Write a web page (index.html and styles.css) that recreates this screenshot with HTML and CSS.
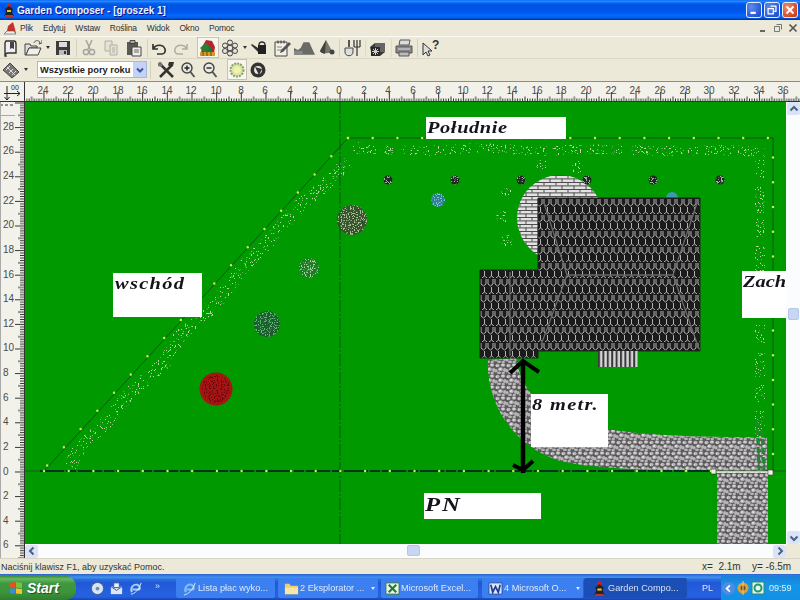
FILE: index.html
```html
<!DOCTYPE html>
<html lang="pl">
<head>
<meta charset="utf-8">
<title>Garden Composer</title>
<link rel="stylesheet" href="styles.css">
</head>
<body>
<div class="window">
  <header class="titlebar">
    <svg class="i14" viewBox="0 0 14 14"><circle cx="7" cy="2.500" r="2" fill="#c22"/><path d="M3 6l4-3 4 3-1 3 2 4H2l2-4z" fill="#222"/><path d="M5 7h4v2H5z" fill="#e8c030"/><path d="M3 12h8v2H3z" fill="#b33"/></svg>
    <span class="title-text">Garden Composer - [groszek 1]</span>
    <div class="winbtns">
      <span class="winbtn"><svg viewBox="0 0 16 16"><rect x="4" y="10" width="6" height="2.500" fill="#fff"/></svg></span>
      <span class="winbtn"><svg viewBox="0 0 16 16"><path d="M6.500 3.500h6v6h-2M3.500 6.500h6v6h-6z" fill="none" stroke="#fff" stroke-width="1.400"/></svg></span>
      <span class="winbtn close"><svg viewBox="0 0 16 16"><path d="M4 4l8 8M12 4l-8 8" stroke="#fff" stroke-width="2.200"/></svg></span>
    </div>
  </header>

  <nav class="menubar">
    <svg class="i14 menu-icon" viewBox="0 0 14 14"><path d="M1 13l3-3 1-5 5-4 2 7 1 5z" fill="#c9302c"/><path d="M1 13h12l-2-3H4z" fill="#eee" stroke="#555" stroke-width=".6"/></svg>
    <span>Plik</span><span>Edytuj</span><span>Wstaw</span><span>Roślina</span><span>Widok</span><span>Okno</span><span>Pomoc</span>
    <div class="mdibtns">
      <svg viewBox="0 0 10 10"><rect x="2" y="7" width="5" height="2" fill="#666"/></svg>
      <svg viewBox="0 0 10 10"><path d="M3.500 1.500h5v5M1.500 3.500h5v5h-5z" fill="none" stroke="#777"/></svg>
      <svg viewBox="0 0 10 10"><path d="M1.500 1.500l7 7M8.500 1.500l-7 7" stroke="#555" stroke-width="1.700"/></svg>
    </div>
  </nav>

  <div class="toolbar tb1">
    <span class="tb"><svg viewBox="0 0 18 18"><path d="M4 2h8c2 0 2 2 2 3v9H6c-2 0-3 1-2 3H3V4z" fill="#eee" stroke="#333" stroke-width="1.400"/><path d="M8 3v7l2-1 2 1V3z" fill="#444"/></svg></span>
    <span class="tb"><svg viewBox="0 0 18 18"><path d="M1 5h5l1 2h6v2H5l-3 7H1z" fill="#ddd" stroke="#444"/><path d="M5 9h12l-3 7H2z" fill="#f0f0e8" stroke="#444"/><path d="M10 4c1-3 4-3 6-1l-1 2 3-1 0-3" fill="none" stroke="#555"/></svg></span>
    <span class="tb-arrow"><i class="caret"></i></span>
    <span class="tb"><svg viewBox="0 0 18 18"><path d="M2 2h14v14H2z" fill="#3c3c3c"/><path d="M5 3h8v5H5z" fill="#ddd"/><path d="M5 11h8v5H5z" fill="#bbb"/><path d="M10 12h2v3h-2z" fill="#333"/></svg></span>
    <i class="sep"></i>
    <span class="tb"><svg viewBox="0 0 18 18"><path d="M6 1l4 9M12 1L8 10" stroke="#a5a5a0" stroke-width="1.500" fill="none"/><circle cx="6" cy="13" r="2.600" fill="none" stroke="#a5a5a0" stroke-width="1.500"/><circle cx="12" cy="13" r="2.600" fill="none" stroke="#a5a5a0" stroke-width="1.500"/></svg></span>
    <span class="tb"><svg viewBox="0 0 18 18"><path d="M3 2h7v10H3z" fill="#e4e2d6" stroke="#b2b0a6"/><path d="M8 6h7v10H8z" fill="#e4e2d6" stroke="#b2b0a6"/><path d="M10 9h3M10 11h3M10 13h3" stroke="#b2b0a6"/></svg></span>
    <span class="tb"><svg viewBox="0 0 18 18"><path d="M3 3h11v13H3z" fill="#5a5a50"/><path d="M6 1.500h5v3H6z" fill="#aaa" stroke="#333" stroke-width=".8"/><path d="M8 8h9v9H8z" fill="#eee" stroke="#444"/><path d="M10 11h5M10 13h5" stroke="#666"/></svg></span>
    <i class="sep sep-b"></i>
    <span class="tb"><svg viewBox="0 0 18 18"><path d="M3 5v5h5M3 10c3-5 10-5 12 0 1 3-1 5-3 5H7" fill="none" stroke="#333" stroke-width="1.700"/></svg></span>
    <span class="tb"><svg viewBox="0 0 18 18"><path d="M15 5v5h-5M15 10c-3-5-10-5-12 0-1 3 1 5 3 5h5" fill="none" stroke="#aeaca2" stroke-width="1.500"/></svg></span>
    <span class="tb active tb-gap"><svg viewBox="0 0 18 18"><path d="M7 1l6 1 3 6-1 6H2l1-6z" fill="#b3262a"/><path d="M1 9l6-5 4 4-5 6z" fill="#2e7c37"/><path d="M7 13l3-6 3 2-1 5z" fill="#197a3d"/><path d="M1 13h15v4H1z" fill="#d99a28"/><path d="M4 13v4M8 13v4M12 13v4" stroke="#6d4a12"/></svg></span>
    <span class="tb"><svg viewBox="0 0 18 18"><g fill="#e8e6da" stroke="#444"><circle cx="9" cy="3.500" r="2.500"/><circle cx="14" cy="6.500" r="2.500"/><circle cx="14" cy="12" r="2.500"/><circle cx="9" cy="14.500" r="2.500"/><circle cx="4" cy="12" r="2.500"/><circle cx="4" cy="6.500" r="2.500"/><circle cx="9" cy="9" r="2.800"/></g></svg></span>
    <span class="tb-arrow"><i class="caret"></i></span>
    <span class="tb"><svg viewBox="0 0 18 18"><path d="M7 6h8v9H7z" fill="#222"/><path d="M7 9L1 5l-1 1 7 7z" fill="#333"/><path d="M8 6c0-4 6-4 6 0" fill="none" stroke="#333" stroke-width="1.300"/></svg></span>
    <span class="tb"><svg viewBox="0 0 18 18"><path d="M2 3h12v14H2z" fill="#f2f0e4" stroke="#444"/><path d="M5 1.500v3M8 1.500v3M11 1.500v3" stroke="#333"/><path d="M4 8h5M4 11h5" stroke="#888"/><path d="M16 3l2 2-8 8-3 1 1-3z" fill="#555"/></svg></span>
    <span class="tb"><svg class="wide" viewBox="0 0 22 18"><path d="M0 16V9l4 2 3-2 3-6h6l4 9 2 4z" fill="#6a6a66"/><path d="M0 12h9v4H0z" fill="#888"/></svg></span>
    <span class="tb"><svg viewBox="0 0 18 18"><path d="M9 1l6 11c-1 3-11 3-12 0z" fill="#77776f"/><path d="M9 1l-6 11c1 2 3 2 5 3z" fill="#44443f"/><circle cx="15" cy="13" r="2.500" fill="#444"/></svg></span>
    <i class="sep"></i>
    <span class="tb"><svg viewBox="0 0 18 18"><path d="M11 1v7M14 1v7M17 1v7M11 8h6M14 8v9" stroke="#333" stroke-width="1.200" fill="none"/><path d="M6 1v7" stroke="#333" stroke-width="1.600"/><path d="M2 9h8v4c0 5-8 5-8 0z" fill="#ddd" stroke="#444"/></svg></span>
    <i class="sep sep-f"></i>
    <span class="tb"><svg viewBox="0 0 18 18"><path d="M1 8l5-4h10v9l-5 4H3z" fill="#3a3a3a"/><path d="M6 4h10v9H6z" fill="#666"/><path d="M2 8h9v9H2z" fill="#2a2a2a"/><path d="M4 10l5 5M9 10l-5 5M6.500 9v7M3 12.500h7" stroke="#ccc"/></svg></span>
    <i class="sep sep-f"></i>
    <span class="tb"><svg viewBox="0 0 18 18"><path d="M5 1h10l-1 5H4z" fill="#ddd" stroke="#555"/><path d="M1 7h16v7H1z" fill="#888" stroke="#555"/><path d="M3 10h12" stroke="#ddd"/><path d="M4 13h10v4H4z" fill="#bbb" stroke="#555"/></svg></span>
    <i class="sep"></i>
    <span class="tb help"><svg viewBox="0 0 18 18"><path d="M1 4v12l3-3 2 4 2-1-2-4h4z" fill="#ddd" stroke="#333"/><text x="10" y="10" class="help-q">?</text></svg></span>
  </div>

  <div class="toolbar tb2">
    <span class="tb"><svg viewBox="0 0 18 18"><path d="M1 9l7-7 9 9-7 6z" fill="#777" stroke="#444"/><path d="M4 9l4-4M7 12l4-4M10 14l4-4M5 6l8 8" stroke="#ddd"/></svg></span>
    <span class="tb-arrow tb-arrow2"><i class="caret"></i></span>
    <div class="combo">
      <span class="combo-text">Wszystkie pory roku</span>
      <span class="combo-btn"><svg viewBox="0 0 10 10"><path d="M2 3.500l3 3 3-3" fill="none" stroke="#3b56a6" stroke-width="2"/></svg></span>
    </div>
    <i class="sep sep-h"></i>
    <span class="tb"><svg viewBox="0 0 18 18"><path d="M2 2l14 14M3 16L15 4" stroke="#333" stroke-width="2.500"/><path d="M12 1l5 0-1 4-3 1-2-2z" fill="#333"/><path d="M1 2l3-1 2 3-2 2-3-1z" fill="#777"/></svg></span>
    <span class="tb"><svg viewBox="0 0 18 18"><circle cx="8" cy="7" r="5" fill="#e9e9e0" stroke="#444" stroke-width="1.400"/><path d="M5.500 7h5M8 4.500v5" stroke="#222" stroke-width="1.400"/><path d="M11.500 11l4 5" stroke="#555" stroke-width="2"/></svg></span>
    <span class="tb"><svg viewBox="0 0 18 18"><circle cx="8" cy="7" r="5" fill="#e9e9e0" stroke="#444" stroke-width="1.400"/><path d="M5.500 7h5" stroke="#222" stroke-width="1.400"/><path d="M11.500 11l4 5" stroke="#555" stroke-width="2"/></svg></span>
    <span class="tb active tb-gap2"><svg viewBox="0 0 18 18"><circle cx="9" cy="9" r="6.500" fill="#d8e8a0" stroke="#8aa070" stroke-width="2" stroke-dasharray="2 1"/><circle cx="9" cy="9" r="3.500" fill="#f4f0b0"/></svg></span>
    <span class="tb"><svg viewBox="0 0 18 18"><circle cx="9" cy="9" r="7.500" fill="#333"/><circle cx="9" cy="9" r="4" fill="#e8e8e0"/><path d="M6 6l7 2-3 6z" fill="#333"/></svg></span>
  </div>

  <svg class="top-ruler" viewBox="0 0 800 20" aria-label="linijka">
    <defs>
      <pattern id="tick-h" width="24.67" height="20" patternUnits="userSpaceOnUse" patternTransform="translate(339.5 0)">
        <path d="M.5 10v10M2.970 16.500v4M5.430 16.500v4M7.900 16.500v4M10.370 16.500v4M12.830 14.500v6M15.300 16.500v4M17.770 16.500v4M20.230 16.500v4M22.700 16.500v4" stroke="#333" fill="none"/>
      </pattern>
    </defs>
    <rect x="26" y="0" width="774" height="20" fill="url(#tick-h)"/>
    <path d="M0 19.500h800" stroke="#333"/>
    <path d="M24.500 0v20" stroke="#333"/>
    <g class="ruler-num" text-anchor="middle">
      <text x="43" y="12">24</text><text x="68" y="12">22</text><text x="93" y="12">20</text><text x="118" y="12">18</text><text x="142" y="12">16</text><text x="167" y="12">14</text><text x="191" y="12">12</text><text x="216" y="12">10</text><text x="241" y="12">8</text><text x="265" y="12">6</text><text x="290" y="12">4</text><text x="315" y="12">2</text><text x="339" y="12">0</text><text x="364" y="12">2</text><text x="388" y="12">4</text><text x="413" y="12">6</text><text x="438" y="12">8</text><text x="463" y="12">10</text><text x="487" y="12">12</text><text x="512" y="12">14</text><text x="537" y="12">16</text><text x="561" y="12">18</text><text x="586" y="12">20</text><text x="611" y="12">22</text><text x="635" y="12">24</text><text x="660" y="12">26</text><text x="685" y="12">28</text><text x="709" y="12">30</text><text x="734" y="12">32</text><text x="759" y="12">34</text><text x="783" y="12">36</text>
    </g>
    <text x="11" y="8" class="ruler-small">00</text>
    <path d="M4 11.500h16M17 9l3 2.500-3 2.500M7 4v14M4.500 15l2.500 3 2.500-3" fill="none" stroke="#222"/>
  </svg>

  <main class="workspace">
    <svg class="left-ruler" viewBox="0 102 25 456" aria-label="linijka">
      <defs>
        <pattern id="tick-v" width="25" height="24.6" patternUnits="userSpaceOnUse" patternTransform="translate(0 471.5)">
          <path d="M15 .5h10M20 2.960h5M20 5.420h5M20 7.880h5M20 10.340h5M18 12.800h7M20 15.260h5M20 17.720h5M20 20.180h5M20 22.640h5" stroke="#333" fill="none"/>
        </pattern>
      </defs>
      <rect x="0" y="102" width="25" height="456" fill="url(#tick-v)"/>
      <path d="M24.500 102v456" stroke="#333"/>
      <path d="M0 105h14" stroke="#333" stroke-dasharray="3 2"/>
      <path d="M0 115.500h15" stroke="#aaa"/>
      <path d="M.5 102v456" stroke="#aaa"/>
      <g class="ruler-num">
        <text x="3" y="130">28</text><text x="3" y="154">26</text><text x="3" y="179">24</text><text x="3" y="204">22</text><text x="3" y="228">20</text><text x="3" y="253">18</text><text x="3" y="278">16</text><text x="3" y="302">14</text><text x="3" y="327">12</text><text x="3" y="351">10</text><text x="3" y="376">8</text><text x="3" y="401">6</text><text x="3" y="425">4</text><text x="3" y="450">2</text><text x="3" y="475">0</text><text x="3" y="499">2</text><text x="3" y="524">4</text><text x="3" y="548">6</text>
      </g>
    </svg>

    <div class="canvas">
      <svg class="plan" viewBox="25 102 761 442" role="img" aria-label="plan ogrodu">
        <defs>
          <filter id="speck" x="-10%" y="-10%" width="120%" height="120%" color-interpolation-filters="sRGB">
            <feTurbulence type="fractalNoise" baseFrequency="0.75" numOctaves="2" seed="4" result="n"/>
            <feColorMatrix in="n" type="matrix" values="0 0 0 0 0  0 0 0 0 0  0 0 0 0 0  14 0 0 0 -7.700" result="m"/>
            <feComposite in="SourceGraphic" in2="m" operator="in"/>
          </filter>
          <filter id="speck-hedge" x="-10%" y="-10%" width="120%" height="120%" color-interpolation-filters="sRGB">
            <feTurbulence type="fractalNoise" baseFrequency="0.6" numOctaves="2" seed="9" result="n"/>
            <feColorMatrix in="n" type="matrix" values="0 0 0 0 0  0 0 0 0 0  0 0 0 0 0  14 0 0 0 -8.700" result="m"/>
            <feComposite in="SourceGraphic" in2="m" operator="in"/>
          </filter>
          <pattern id="roof" width="7" height="16" patternUnits="userSpaceOnUse" patternTransform="translate(480 198)">
            <rect width="7" height="16" fill="#1b1b1b"/>
            <path d="M1 1v5l2.500 2L6 6V1M4.500 9v5l2.500 2M4.500 14L2 16" fill="none" stroke="#c4c4c4" stroke-width=".9"/>
          </pattern>
          <pattern id="brick" width="12" height="7" patternUnits="userSpaceOnUse" patternTransform="translate(517 175)">
            <rect width="12" height="7" fill="#e2e2e2"/>
            <path d="M0 .5h12M0 3.900h12M3 0v3.500M9 3.500v3.500" stroke="#4c4c4c" fill="none"/>
          </pattern>
          <pattern id="gravel" width="11" height="11" patternUnits="userSpaceOnUse">
            <rect width="11" height="11" fill="#5b5b5b"/>
            <g fill="#b7b4b7"><ellipse cx="2.500" cy="2.500" rx="2.100" ry="1.800"/><ellipse cx="8" cy="2" rx="2.300" ry="1.700"/><ellipse cx="5.500" cy="6.200" rx="2.400" ry="1.900"/><ellipse cx="1" cy="7.800" rx="1.700" ry="1.700"/><ellipse cx="9.800" cy="7" rx="1.800" ry="1.900"/><ellipse cx="4" cy="9.800" rx="2" ry="1.300"/><ellipse cx="8.200" cy="10" rx="1.700" ry="1.200"/></g>
            <g fill="#e4e2e4"><circle cx="8" cy="1.800" r=".9"/><circle cx="5" cy="6" r="1"/><circle cx="1.500" cy="3" r=".7"/></g>
          </pattern>
          <pattern id="stairs" width="4.400" height="16" patternUnits="userSpaceOnUse" patternTransform="translate(598 351)">
            <rect width="4.400" height="16" fill="#d6d6d6"/>
            <rect width="2" height="16" fill="#3a3a3a"/>
          </pattern>
        </defs>
        <rect x="25" y="102" width="761" height="442" class="lawn"/>

        <g filter="url(#speck-hedge)" fill="none" stroke="#bcd4a8" stroke-width="10">
          <path d="M358 148L420 151 480 148 540 151 600 149 660 151 720 150 765 152" stroke-dasharray="22 4 11 6 30 3"/>
          <path d="M70 466L80 447 100 430 130 393 165 362 180 335 215 305 245 265 270 240 300 205 320 190 348 162" stroke-width="13" stroke-dasharray="18 3 24 4"/>
          <path d="M760 160V300M760 325V470" stroke-dasharray="18 9 26 6"/>
        </g>

        <circle cx="560" cy="218" r="43" fill="url(#brick)"/>
        <circle cx="672" cy="198" r="6" fill="#3a9ab0"/>
        <path class="drive" d="M488 360C486 400 510 445 560 461 600 470 660 470 710 471L767 471 767 437C700 437 640 437 580 424 540 415 520 385 516 358Z"/>
        <rect class="drive" x="717" y="472" width="51" height="72"/>
        <path d="M757 420L759 470M762 430L764 470" stroke="#1f8a2c" stroke-width="3" stroke-dasharray="6 3" fill="none"/>

        <path class="roof" d="M538 198H700V351H538V358H480V270H538Z"/>
        <path d="M567 275H673M673 275L698 200M673 275L699 349M567 275L541 345M567 275L543 200M510 272V356" stroke="#6a6a6a" stroke-width="1.300" fill="none"/>
        <rect x="598" y="351" width="40" height="16" fill="url(#stairs)"/>

        <g filter="url(#speck-hedge)" fill="#cfe0bd">
          <circle cx="507" cy="194" r="6"/><circle cx="502" cy="217" r="6"/><circle cx="507" cy="241" r="6"/><circle cx="542" cy="165" r="6"/><circle cx="577" cy="167" r="6"/><circle cx="359" cy="148" r="6"/>
        </g>
        <g fill="#1c2a20">
          <circle cx="388" cy="180" r="4.500"/><circle cx="455" cy="180" r="4.500"/><circle cx="521" cy="180" r="4.500"/><circle cx="587" cy="180" r="4.500"/><circle cx="653" cy="180" r="4.500"/><circle cx="720" cy="180" r="4.500"/>
        </g>
        <g filter="url(#speck)" fill="#a8b0a8">
          <circle cx="388" cy="180" r="4.500"/><circle cx="455" cy="180" r="4.500"/><circle cx="521" cy="180" r="4.500"/><circle cx="587" cy="180" r="4.500"/><circle cx="653" cy="180" r="4.500"/><circle cx="720" cy="180" r="4.500"/>
        </g>

        <circle cx="438" cy="200" r="7" fill="#2f7f8e"/>
        <circle cx="352" cy="220" r="15" fill="#34522c"/>
        <circle cx="309" cy="268" r="10" fill="#1c7a28"/>
        <circle cx="267" cy="324" r="13" fill="#1f5a30"/>
        <circle cx="216" cy="389" r="16.500" fill="#a81414"/>
        <g filter="url(#speck)">
          <circle cx="438" cy="200" r="7" fill="#7cc8e0"/>
          <circle cx="352" cy="220" r="15" fill="#aebc98"/>
          <circle cx="309" cy="268" r="10" fill="#a8d498"/>
          <circle cx="267" cy="324" r="13" fill="#55c070"/>
        </g>
        <circle class="red-speck" cx="216" cy="389" r="14" filter="url(#speck)"/>

        <path class="dashed" d="M340 102V544"/>
        <path d="M25 471H786" stroke="#1e5a1e"/>
        <path d="M40 471H712" stroke="#032" stroke-width="2" stroke-dasharray="24 2 10 2"/>
        <path d="M713 472H770" stroke="#f2f2e8" stroke-width="1.500"/>
        <rect x="711" y="469" width="5" height="5" fill="#f2f2e0" stroke="#222" stroke-width=".6"/>
        <rect x="768" y="470" width="5" height="5" fill="#f2f2e0" stroke="#444" stroke-width=".6"/>
        <path d="M45 470L348 138H773V471" fill="none" stroke="#0a5a12"/>
        <g class="dots">
          <path d="M348 138H773V471"/>
          <path d="M348 138L43 470"/>
          <path d="M44 471H712"/>
        </g>

        <path d="M523 360V473" stroke="#000" stroke-width="4.500"/>
        <path d="M510 373L523 361 539 372M513 465L523 470 533 461" fill="none" stroke="#000" stroke-width="4"/>
      </svg>
      <div class="lbl lbl-south"><span>Południe</span></div>
      <div class="lbl lbl-east"><span>wschód</span></div>
      <div class="lbl lbl-west"><span>Zach</span></div>
      <div class="lbl lbl-dist"><span>8 metr.</span></div>
      <div class="lbl lbl-north"><span>PN</span></div>
    </div>

    <div class="vscroll">
      <span class="sbtn"><svg viewBox="0 0 12 12"><path d="M2.500 7.500L6 4l3.500 3.500" fill="none" stroke="#4d6185" stroke-width="2"/></svg></span>
      <span class="thumb thumb-v"></span>
      <span class="sbtn"><svg viewBox="0 0 12 12"><path d="M2.500 4.500L6 8l3.500-3.500" fill="none" stroke="#4d6185" stroke-width="2"/></svg></span>
    </div>
    <div class="hscroll">
      <span class="sbtn"><svg viewBox="0 0 12 12"><path d="M7.500 2.500L4 6l3.500 3.500" fill="none" stroke="#4d6185" stroke-width="2"/></svg></span>
      <span class="thumb thumb-h"></span>
      <span class="sbtn"><svg viewBox="0 0 12 12"><path d="M4.500 2.500L8 6l-3.500 3.500" fill="none" stroke="#4d6185" stroke-width="2"/></svg></span>
    </div>
    <div class="corner"></div>
  </main>

  <footer class="statusbar">
    <span class="status-msg">Naciśnij klawisz F1, aby uzyskać Pomoc.</span>
    <span class="status-x">x=&nbsp; 2.1m</span>
    <span class="status-y">y= -6.5m</span>
  </footer>
</div>

<div class="taskbar">
  <div class="start">
    <svg class="flag" viewBox="0 0 16 16"><path d="M2 3l5-1v5.500l-5 .5z" fill="#e8502a"/><path d="M8 2l6 1v5l-6-.5z" fill="#7ac143"/><path d="M2 9l5-.5V14l-5-1z" fill="#3d8ce0"/><path d="M8 8.500l6 .5v5l-6-.5z" fill="#f5c422"/></svg>
    <span>Start</span>
  </div>
  <div class="quick">
    <svg viewBox="0 0 16 16"><circle cx="8" cy="8" r="6.500" fill="#d8e4f2" stroke="#375a92"/><circle cx="8" cy="8" r="2" fill="#6d8ab8"/></svg>
    <svg viewBox="0 0 16 16"><path d="M2 6h12v8H2z" fill="#dbe7f5"/><path d="M5 2h6v5H5z" fill="#eef" stroke="#3a5a90"/><path d="M2 6l6 4 6-4" fill="none" stroke="#3a5a90"/></svg>
    <svg viewBox="0 0 16 16"><path d="M4 12c-2-5 2-9 6-8 3 1 3 5 2 5H5" fill="none" stroke="#a8d0f4" stroke-width="2"/><path d="M3 14c4 0 9-5 11-12" fill="none" stroke="#e3edf8"/></svg>
    <span class="more">»</span>
  </div>
  <div class="task t1"><svg viewBox="0 0 16 16"><path d="M4 12c-2-5 2-9 6-8 3 1 3 5 2 5H5" fill="none" stroke="#7fc0f4" stroke-width="2.200"/><path d="M2 15c5-1 10-6 12-13" fill="none" stroke="#e3edf8"/></svg><span class="task-text">Lista płac wyko...</span></div>
  <div class="task t2"><svg viewBox="0 0 16 16"><path d="M1 3h5l1 2h8v9H1z" fill="#f0cd66"/><path d="M1 7h14v7H1z" fill="#f9e6a6"/></svg><span class="task-text">2 Eksplorator ...</span><i class="down"></i></div>
  <div class="task t3"><svg viewBox="0 0 16 16"><path d="M1 2h14v12H1z" fill="#e8f2e8" stroke="#2f7a44"/><path d="M4 4l8 8M12 4l-8 8" stroke="#1f7a38" stroke-width="2.200"/></svg><span class="task-text">Microsoft Excel...</span></div>
  <div class="task t4"><svg viewBox="0 0 16 16"><path d="M1 2h14v12H1z" fill="#dfe8f7" stroke="#2b4ea0"/><path d="M3 4l2 8 3-6 3 6 2-8" fill="none" stroke="#1d3d96" stroke-width="1.800"/></svg><span class="task-text">4 Microsoft O...</span><i class="down"></i></div>
  <div class="task t5"><svg viewBox="0 0 14 14"><circle cx="7" cy="2.500" r="2" fill="#c22"/><path d="M3 6l4-3 4 3-1 3 2 4H2l2-4z" fill="#222"/><path d="M5 7h4v2H5z" fill="#e8c030"/><path d="M3 12h8v2H3z" fill="#b33"/></svg><span class="task-text">Garden Compo...</span></div>
  <span class="lang">PL</span>
  <div class="tray">
    <span class="chev"><svg viewBox="0 0 12 12"><path d="M7.500 2.500L4 6l3.500 3.500" fill="none" stroke="#fff" stroke-width="2"/></svg></span>
    <svg class="tray-ic" viewBox="0 0 14 14"><circle cx="7" cy="7" r="5.500" fill="#d9a23a"/><circle cx="7" cy="7" r="2.500" fill="#7a4a20"/><path d="M7 0v14" stroke="#f0d080"/></svg>
    <svg class="tray-ic" viewBox="0 0 14 14"><path d="M1 1h12v12H1z" fill="#e6f4ec" stroke="#2a8a68"/><circle cx="7" cy="7" r="3.500" fill="none" stroke="#1f9a70" stroke-width="2"/></svg>
    <span class="clock">09:59</span>
  </div>
</div>
</body>
</html>
```
FILE: styles.css
```css
* { box-sizing: border-box; }
html, body { margin: 0; padding: 0; }
body {
  width: 800px;
  height: 600px;
  overflow: hidden;
  display: flex;
  flex-direction: column;
  font-family: "Liberation Sans", Arial, sans-serif;
  background: #ece9d8;
  color: #222;
}
svg { display: block; }

.window { height: 574px; flex: none; display: flex; flex-direction: column; }

/* title bar */
.titlebar {
  height: 20px;
  flex: none;
  display: flex;
  align-items: center;
  padding: 0 2px;
  background: linear-gradient(#0058ee 0, #3593ff 5%, #127dff 10%, #0262ee 16%, #0054e3 26%, #0055eb 56%, #005bf5 66%, #026afe 76%, #0062ef 86%, #0052d6 92%, #0040ab 95%, #003092 100%);
}
.i14 { width: 14px; height: 14px; flex: none; }
.title-text {
  margin-left: 1px;
  font-size: 10px;
  font-weight: bold;
  color: #eef3ff;
  text-shadow: 1px 1px 0 #0f1089;
}
.winbtns { margin-left: auto; display: flex; gap: 2px; }
.winbtn {
  width: 16px;
  height: 16px;
  border: 1px solid #e8effc;
  border-radius: 3px;
  background: radial-gradient(circle at 30% 30%, #5b8cf0, #2450cf 80%);
}
.winbtn.close { background: radial-gradient(circle at 30% 30%, #ee8d6d, #d2401c 80%); }

/* menu */
.menubar {
  height: 16px;
  flex: none;
  display: flex;
  align-items: center;
  gap: 10px;
  font-size: 8.500px;
  letter-spacing: -.2px;
  color: #333;
  padding-left: 3px;
}
.menu-icon { margin-right: -7px; }
.mdibtns { margin-left: auto; display: flex; gap: 5px; padding-right: 2px; }
.mdibtns svg { width: 10px; height: 10px; }

/* toolbars */
.toolbar { display: flex; align-items: center; flex: none; }
.tb1 {
  height: 23px;
  border-top: 1px solid #fbfaf4;
  border-bottom: 1px solid #d9d6c4;
}
.tb2 {
  height: 23px;
  border-bottom: 1px solid #8e8c80;
  padding-bottom: 1px;
}
.tb {
  width: 22px;
  height: 21px;
  flex: none;
  display: flex;
  align-items: center;
  justify-content: center;
}
.tb svg { width: 18px; height: 18px; }
.tb svg.wide { width: 21px; }
.tb.active { background: #f6f5ee; border: 1px solid #c5c3b4; }
.tb-gap { margin-left: 5px; }
.tb-gap2 { margin-left: 6px; width: 20px; }
.help { margin-left: 1px; }
.help-q { font: bold 12px "Liberation Sans", sans-serif; fill: #333; }
.tb-arrow { width: 8px; flex: none; display: flex; align-items: center; justify-content: center; }
.tb-arrow2 { width: 7px; }
.caret { border-left: 2.5px solid transparent; border-right: 2.5px solid transparent; border-top: 3px solid #333; }
.sep { width: 1px; height: 18px; flex: none; background: #d4d1bd; margin: 0 1px 0 2px; }
.sep-b { margin: 0 0 0 3px; }
.sep-f { background: #dfdccb; }
.sep-h { margin: 0 4px 0 3px; }

.combo {
  width: 110px;
  height: 17px;
  margin-left: 8px;
  display: flex;
  align-items: center;
  justify-content: space-between;
  background: #fff;
  border: 1px solid #a9b8d8;
  padding-left: 2px;
}
.combo-text { font-size: 9.300px; font-weight: bold; color: #222; white-space: nowrap; }
.combo-btn { width: 13px; height: 15px; background: #c4d3f5; display: flex; align-items: center; justify-content: center; }
.combo-btn svg { width: 10px; height: 10px; }

/* rulers */
.top-ruler { width: 800px; height: 20px; flex: none; background: #f3f2ea; }
.ruler-num { font: 10px "Liberation Sans", sans-serif; fill: #4a4a4a; }
.ruler-small { font: 7px "Liberation Sans", sans-serif; fill: #222; }

.workspace {
  flex: none;
  height: 456px;
  display: grid;
  grid-template-columns: 25px 761px 14px;
  grid-template-rows: 442px 14px;
}
.left-ruler { grid-row: 1 / 3; grid-column: 1; width: 25px; height: 456px; background: #f3f2ea; }
.canvas { grid-row: 1; grid-column: 2; position: relative; overflow: hidden; }
.plan { width: 761px; height: 442px; }
.lawn { fill: #009900; }
.drive { fill: url(#gravel); }
.roof { fill: url(#roof); stroke: #222; }
.red-speck { fill: #5a0a0a; }
.dashed { stroke: #005a14; stroke-dasharray: 12 2 2 2; fill: none; }
.dots path { fill: none; stroke: #c6f04a; stroke-width: 2.500; stroke-linecap: round; stroke-dasharray: 0 24.700; }

.lbl {
  position: absolute;
  background: #fff;
  font-family: "Liberation Serif", "Times New Roman", serif;
  font-weight: bold;
  font-style: italic;
  font-size: 17px;
  color: #14141c;
  line-height: 1;
  white-space: nowrap;
  padding: 2px 0 0 1px;
}
.lbl span { display: inline-block; transform: scaleX(1.2); transform-origin: left center; }
.lbl-south { left: 401px; top: 15px; width: 140px; height: 22px; letter-spacing: .5px; }
.lbl-east { left: 88px; top: 171px; width: 89px; height: 44px; letter-spacing: 1.100px; padding-left: 2px; }
.lbl-west { left: 717px; top: 169px; width: 46px; height: 47px; }
.lbl-dist { left: 506px; top: 292px; width: 77px; height: 53px; letter-spacing: 1.100px; }
.lbl-north { left: 399px; top: 391px; width: 117px; height: 26px; letter-spacing: 1.500px; font-size: 19px; }
.lbl-north span { transform: scaleX(1.3); }

/* scrollbars */
.vscroll, .hscroll { display: flex; background: #fbfcfe; justify-content: space-between; }
.vscroll { grid-row: 1; grid-column: 3; flex-direction: column; position: relative; }
.hscroll { grid-row: 2; grid-column: 2; position: relative; align-items: center; }
.corner { grid-row: 2; grid-column: 3; background: #ece9d8; }
.sbtn {
  width: 13px;
  height: 13px;
  flex: none;
  background: #d9e4f8;
  border-radius: 2px;
  display: flex;
  align-items: center;
  justify-content: center;
}
.sbtn svg { width: 12px; height: 12px; }
.vscroll .sbtn { margin-left: 1px; }
.thumb { position: absolute; background: #c8d6f4; border: 1px solid #b4c6ea; border-radius: 2px; }
.thumb-v { left: 2px; top: 206px; width: 11px; height: 12px; }
.thumb-h { left: 382px; top: 1px; width: 13px; height: 11px; }

/* status */
.statusbar {
  flex: none;
  height: 16px;
  display: flex;
  align-items: center;
  font-size: 9px;
  color: #333;
  border-top: 1px solid #d8d5c4;
  padding-left: 1px;
}
.status-msg { flex: 1; }
.status-x { width: 50px; font-size: 10px; }
.status-y { width: 48px; font-size: 10px; }

/* taskbar */
.taskbar {
  flex: none;
  height: 26px;
  display: flex;
  align-items: center;
  padding-top: 2px;
  background: linear-gradient(#2a5fc8 0, #3682e5 8%, #4490e6 14%, #2b71e0 20%, #2157d6 34%, #245ddb 56%, #2562df 86%, #2158d4 92%, #1941a5 100%);
  color: #fff;
  font-size: 9.200px;
}
.start {
  width: 76px;
  height: 24px;
  flex: none;
  display: flex;
  align-items: center;
  gap: 3px;
  padding-left: 8px;
  border-radius: 0 10px 10px 0;
  background: linear-gradient(#3a8a3a 0, #67b965 12%, #3f983f 30%, #3c933c 70%, #2e7e2e 100%);
  font-size: 14px;
  font-style: italic;
  font-weight: bold;
  text-shadow: 1px 1px 1px #1b4f1b;
}
.flag { width: 16px; height: 16px; }
.quick {
  width: 100px;
  flex: none;
  display: flex;
  align-items: center;
  gap: 4px;
  padding-left: 14px;
}
.quick svg { width: 15px; height: 15px; }
.more { margin-left: 8px; font-size: 9px; align-self: flex-start; opacity: .8; }
.task {
  height: 20px;
  flex: none;
  display: flex;
  align-items: center;
  gap: 1px;
  padding-left: 6px;
  background: #3c7ff0;
  border-radius: 2px;
  position: relative;
}
.task svg { width: 15px; height: 15px; flex: none; }
.task-text { opacity: .82; white-space: nowrap; }
.t1 { width: 99px; }
.t2 { width: 100px; margin-left: 3px; }
.t3 { width: 97px; margin-left: 3px; padding-left: 4px; }
.t4 { width: 101px; margin-left: 4px; }
.t5 { width: 103px; margin-left: 1px; background: #1c4fb6; padding-left: 8px; }
.down {
  position: absolute;
  right: 3px;
  top: 9px;
  border-left: 2.5px solid transparent;
  border-right: 2.5px solid transparent;
  border-top: 3px solid #dfe9fb;
}
.lang { margin-left: 15px; font-size: 9px; opacity: .85; width: 19px; flex: none; }
.tray {
  flex: 1;
  height: 24px;
  display: flex;
  align-items: center;
  background: linear-gradient(#1b7ed8, #1497e8 40%, #1190e4);
  padding-left: 1px;
}
.chev {
  width: 13px;
  height: 13px;
  border-radius: 50%;
  background: #4f8be6;
  display: flex;
  align-items: center;
  justify-content: center;
}
.chev svg { width: 11px; height: 11px; }
.tray-ic { width: 14px; height: 14px; margin-left: 1px; }
.clock { margin-left: 4px; font-size: 9px; opacity: .85; }
```
